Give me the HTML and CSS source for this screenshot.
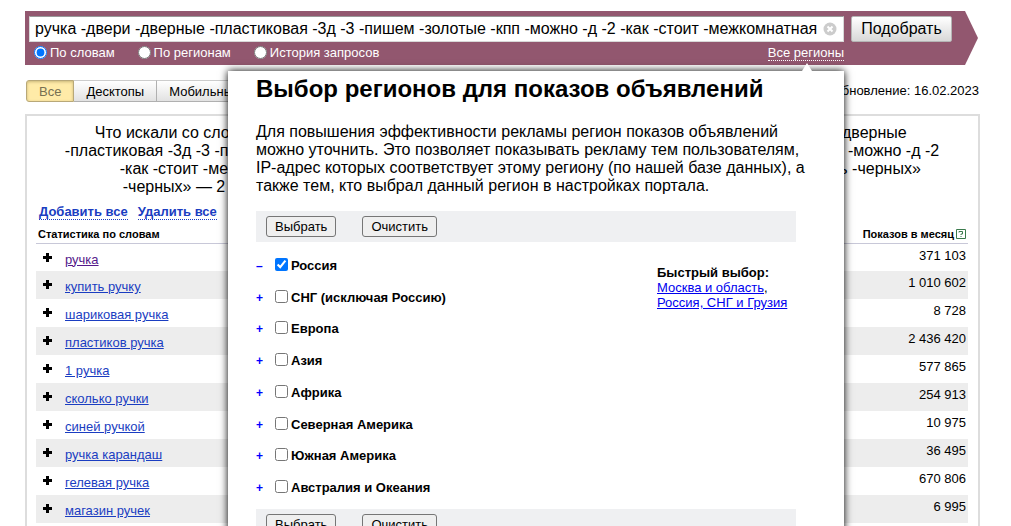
FILE: index.html
```
<!DOCTYPE html>
<html lang="ru">
<head>
<meta charset="utf-8">
<title>Подбор слов</title>
<link rel="stylesheet" href="styles.css">
</head>
<body>
<div class="page">
  <form class="search">
    <div class="search-row">
      <div class="search-box">
        <input class="search-input" type="text" aria-label="Запрос" value="ручка -двери -дверные -пластиковая -3д -3 -пишем -золотые -кпп -можно -д -2 -как -стоит -межкомнатная">
        <button class="clear" type="button" aria-label="Очистить поле">
          <svg width="14" height="14" viewBox="0 0 14 14"><circle cx="7" cy="7" r="6.500" fill="#ccc"/><path d="M4.500 4.500l5 5M9.500 4.500l-5 5" stroke="#fff" stroke-width="2"/></svg>
        </button>
      </div>
      <button class="submit" type="button">Подобрать</button>
    </div>
    <div class="modes">
      <label class="mode"><input class="radio" type="radio" name="mode" checked>По словам</label>
      <label class="mode"><input class="radio" type="radio" name="mode">По регионам</label>
      <label class="mode"><input class="radio" type="radio" name="mode">История запросов</label>
      <a class="all-regions" href="#regions">Все регионы</a>
    </div>
  </form>

  <div class="toolbar">
    <div class="tabs">
      <button class="tab tab-active" type="button">Все</button>
      <button class="tab" type="button">Десктопы</button>
      <button class="tab" type="button">Мобильные</button>
    </div>
    <span>Обновление: 16.02.2023</span>
  </div>

  <main class="results">
    <div class="summaries">
      <p class="summary">Что искали со словом «ручка -двери -дверные<br>-пластиковая -3д -3 -пишем -золотые -кпп -можно -д -2<br>-как -стоит -межкомнатная -приготовить<br>-черных» — 2 436 420 показов в месяц</p>
      <p class="summary">Запросы, похожие на «ручка -двери -дверные<br>-пластиковая -3д -3 -пишем -золотые -кпп -можно -д -2<br>-как -стоит -межкомнатная -приготовить -черных»</p>
    </div>
    <div class="bulk"><a class="bulk-link" href="#add">Добавить все</a><a class="bulk-link" href="#remove">Удалить все</a></div>
    <table class="words">
      <thead><tr><th>Статистика по словам</th><th class="count"><span class="head-count">Показов в месяц<svg width="10" height="10" viewBox="0 0 10 10" fill="none" stroke="#3a7a4c"><path d="M.5.5h9v9h-9zM3 3.500V2.500h3.500v2.500h-1.500v1M5 7v1"/></svg></span></th></tr></thead>
      <tbody>
        <tr><td><span class="plus"></span><a class="word visited" href="#w">ручка</a></td><td class="count">371 103</td></tr>
        <tr><td><span class="plus"></span><a class="word" href="#w">купить ручку</a></td><td class="count">1 010 602</td></tr>
        <tr><td><span class="plus"></span><a class="word" href="#w">шариковая ручка</a></td><td class="count">8 728</td></tr>
        <tr><td><span class="plus"></span><a class="word" href="#w">пластиков ручка</a></td><td class="count">2 436 420</td></tr>
        <tr><td><span class="plus"></span><a class="word" href="#w">1 ручка</a></td><td class="count">577 865</td></tr>
        <tr><td><span class="plus"></span><a class="word" href="#w">сколько ручки</a></td><td class="count">254 913</td></tr>
        <tr><td><span class="plus"></span><a class="word" href="#w">синей ручкой</a></td><td class="count">10 975</td></tr>
        <tr><td><span class="plus"></span><a class="word" href="#w">ручка карандаш</a></td><td class="count">36 495</td></tr>
        <tr><td><span class="plus"></span><a class="word" href="#w">гелевая ручка</a></td><td class="count">670 806</td></tr>
        <tr><td><span class="plus"></span><a class="word" href="#w">магазин ручек</a></td><td class="count">6 995</td></tr>
      </tbody>
    </table>
  </main>

  <section class="popup" id="regions">
    <h1 class="popup-title">Выбор регионов для показов объявлений</h1>
    <p class="popup-text">Для повышения эффективности рекламы регион показов объявлений можно уточнить. Это позволяет показывать рекламу тем пользователям, IP-адрес которых соответствует этому региону (по нашей базе данных), а также тем, кто выбрал данный регион в настройках портала.</p>
    <div class="actions"><button class="action" type="button">Выбрать</button><button class="action" type="button">Очистить</button></div>
    <div class="choice">
      <ul class="regions">
        <li class="region"><a class="toggle" href="#r">–</a><label class="region-label"><input class="check" type="checkbox" checked>Россия</label></li>
        <li class="region"><a class="toggle" href="#r">+</a><label class="region-label"><input class="check" type="checkbox">СНГ (исключая Россию)</label></li>
        <li class="region"><a class="toggle" href="#r">+</a><label class="region-label"><input class="check" type="checkbox">Европа</label></li>
        <li class="region"><a class="toggle" href="#r">+</a><label class="region-label"><input class="check" type="checkbox">Азия</label></li>
        <li class="region"><a class="toggle" href="#r">+</a><label class="region-label"><input class="check" type="checkbox">Африка</label></li>
        <li class="region"><a class="toggle" href="#r">+</a><label class="region-label"><input class="check" type="checkbox">Северная Америка</label></li>
        <li class="region"><a class="toggle" href="#r">+</a><label class="region-label"><input class="check" type="checkbox">Южная Америка</label></li>
        <li class="region"><a class="toggle" href="#r">+</a><label class="region-label"><input class="check" type="checkbox">Австралия и Океания</label></li>
      </ul>
      <div class="quick"><b>Быстрый выбор:</b><br><a class="quick-link" href="#q">Москва и область</a>,<br><a class="quick-link" href="#q">Россия, СНГ и Грузия</a></div>
    </div>
    <div class="actions"><button class="action" type="button">Выбрать</button><button class="action" type="button">Очистить</button></div>
  </section>
</div>
</body>
</html>
```
FILE: styles.css
```
* { box-sizing: border-box; }
body {
  margin: 0;
  background: #fff;
  color: #000;
  font: 13px/16px "Liberation Sans", Arial, sans-serif;
}
input, button { font-family: inherit; }
.page {
  position: relative;
  height: 100vh;
  overflow: hidden;
  padding: 11px 31px 0 25px;
}

.search {
  height: 54px;
  margin-right: 2px;
  padding: 5px 26px 0 4px;
  background: #92576f;
  clip-path: polygon(0 0, calc(100% - 13px) 0, 100% 50%, calc(100% - 13px) 100%, 0 100%);
}
.search-row { display: flex; gap: 7px; }
.search-box {
  display: flex;
  flex: 1;
  align-items: center;
  height: 26px;
  padding: 0 6px 0 5px;
  border: 1px solid #d8d8d8;
  border-top-color: #999;
  background: #fff;
}
.search-input {
  flex: 1;
  min-width: 0;
  height: 24px;
  padding: 0;
  border: 0;
  outline: 0;
  background: none;
  font-size: 16px;
}
.clear { display: flex; padding: 0; border: 0; background: none; }
.submit {
  width: 101px;
  height: 26px;
  padding: 0;
  border: 1px solid #b5b5b5;
  border-radius: 2px;
  background: linear-gradient(#fff, #d8d8d8);
  font-size: 16px;
}
.modes {
  display: flex;
  align-items: center;
  gap: 23px;
  height: 21px;
  padding: 0 108px 0 5px;
  color: #fff;
}
.mode { display: flex; align-items: center; gap: 3px; }
.radio { width: 13px; height: 13px; margin: 0; }
.all-regions {
  margin-left: auto;
  border-bottom: 1px dotted #fff;
  color: #fff;
  line-height: 15px;
  text-decoration: none;
}

.toolbar {
  display: flex;
  justify-content: space-between;
  align-items: center;
  height: 22px;
  margin: 15px 1px 0 1px;
}
.tabs { display: flex; }
.tab {
  height: 22px;
  padding: 0 12px;
  border: 1px solid #b0b0b0;
  border-top-color: #ccc;
  border-left-width: 0;
  background: linear-gradient(#fff, #e2e2e2);
  font-size: 13px;
}
.tab-active {
  border: 1px solid #b8a878;
  border-radius: 3px 0 0 3px;
  background: #ffeba8;
  box-shadow: inset 0 1px 3px #c9b67a;
  color: #777052;
}

.results {
  margin-top: 12px;
  padding: 8px 10px 20px 9px;
  border: 2px solid #ddd;
}
.summaries { display: grid; grid-template-columns: 1fr 1fr; column-gap: 4px; }
.summary { margin: 0; font-size: 16px; line-height: 18px; text-align: center; white-space: nowrap; }
.bulk { display: flex; gap: 10px; padding: 8px 3px 0; }
.bulk-link {
  border-bottom: 1px dotted #1a3dc1;
  color: #1a3dc1;
  font-weight: bold;
  line-height: 15px;
  text-decoration: none;
}
.words { width: 100%; margin-top: 5px; border-collapse: collapse; }
.words th {
  height: 18px;
  padding: 0 2px;
  border-bottom: 1px solid #c8c8d8;
  font-size: 11px;
  line-height: 14px;
  text-align: left;
}
.words td { height: 28px; padding: 3px 2px 0; vertical-align: top; line-height: 18px; }
.words tbody tr:nth-child(even) { background: #ededed; }
.words .count { text-align: right; }
.head-count { display: inline-flex; align-items: center; gap: 2px; }
.plus {
  display: inline-block;
  width: 9px;
  height: 9px;
  margin: 6px 13px 0 5px;
  background:
    linear-gradient(#000, #000) center / 9px 3px no-repeat,
    linear-gradient(#000, #000) center / 3px 9px no-repeat;
  vertical-align: top;
}
.word { display: inline-block; padding-top: 4px; color: #1a3dc1; vertical-align: top; }
.visited { color: #551a8b; }

.popup {
  position: absolute;
  top: 71px;
  left: 228px;
  right: 167px;
  padding: 0 28px 30px;
  background: #fff;
  box-shadow: 0 0 8px #000;
}
.popup::before {
  content: "";
  position: absolute;
  top: -8px;
  right: 32px;
  border: 5px solid transparent;
  border-top: 0;
  border-bottom: 8px solid #fff;
}
.popup-title { margin: 3px 0 0; font-size: 24px; line-height: 30px; }
.popup-text { margin: 19px 0 0; font-size: 16px; line-height: 18px; }
.actions {
  display: flex;
  gap: 26px;
  height: 31px;
  margin: 16px 20px 0 0;
  padding: 5px 10px;
  background: #eff0f2;
}
.action {
  height: 21px;
  padding: 0 8px;
  border: 1px solid #767676;
  border-radius: 3px;
  background: #efefef;
  font-size: 13px;
}
.choice { display: flex; margin-top: 8px; }
.choice + .actions { margin-top: 5px; }
.regions {
  display: grid;
  grid-auto-rows: 1fr;
  flex: 1;
  height: 254px;
  margin: 0;
  padding: 0;
  list-style: none;
}
.region { display: flex; align-items: center; font-weight: bold; }
.toggle { width: 19px; color: #00f; font-size: 12px; text-decoration: none; }
.region-label { display: flex; gap: 3px; }
.check { width: 13px; height: 13px; margin: 0; }
.quick { width: 159px; padding-top: 15px; line-height: 15px; }
.quick-link { color: #00e; }
```
